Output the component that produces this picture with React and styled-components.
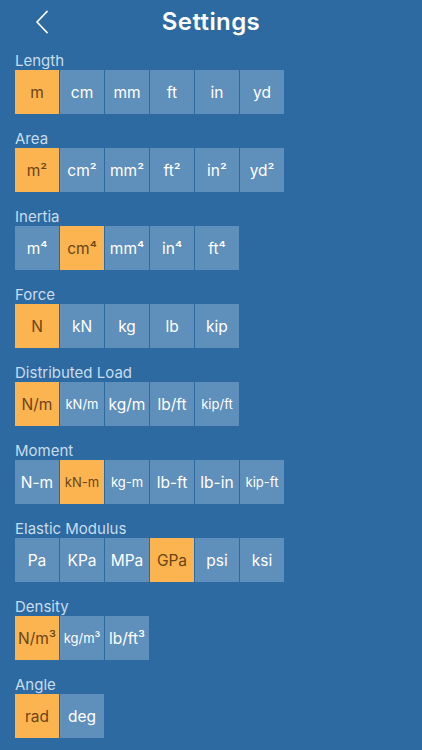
import React, { useState } from 'react';
import styled, { createGlobalStyle } from 'styled-components';

const GlobalStyle = createGlobalStyle`
  html, body {
    margin: 0;
    padding: 0;
    background: #2c6aa1;
  }
  body {
    font-family: Inter, "Liberation Sans", sans-serif;
  }
`;

const SECTIONS = [
  { title: 'Length', units: ['m', 'cm', 'mm', 'ft', 'in', 'yd'], selected: 0 },
  { title: 'Area', units: ['m²', 'cm²', 'mm²', 'ft²', 'in²', 'yd²'], selected: 0 },
  { title: 'Inertia', units: ['m⁴', 'cm⁴', 'mm⁴', 'in⁴', 'ft⁴'], selected: 1 },
  { title: 'Force', units: ['N', 'kN', 'kg', 'lb', 'kip'], selected: 0 },
  { title: 'Distributed Load', units: ['N/m', 'kN/m', 'kg/m', 'lb/ft', 'kip/ft'], selected: 0 },
  { title: 'Moment', units: ['N-m', 'kN-m', 'kg-m', 'lb-ft', 'lb-in', 'kip-ft'], selected: 1 },
  { title: 'Elastic Modulus', units: ['Pa', 'KPa', 'MPa', 'GPa', 'psi', 'ksi'], selected: 3 },
  { title: 'Density', units: ['N/m³', 'kg/m³', 'lb/ft³'], selected: 0 },
  { title: 'Angle', units: ['rad', 'deg'], selected: 0 },
];

const small = ['kN/m', 'kip/ft', 'kN-m', 'kg-m', 'kip-ft', 'kg/m³'];

function Section({ title, units, selected }) {
  const [current, setCurrent] = useState(selected);
  return (
    <Group>
      <Label>{title}</Label>
      <Row>
        {units.map((u, i) => (
          <UnitBtn
            key={u}
            $active={i === current}
            $small={small.includes(u)}
            onClick={() => setCurrent(i)}
          >
            {u}
          </UnitBtn>
        ))}
      </Row>
    </Group>
  );
}

export default function App() {
  return (
    <>
      <GlobalStyle />
      <Page>
        <Header>
          <BackBtn aria-label="Back">
            <svg width="14" height="24" viewBox="0 0 14 24" fill="none">
              <path d="M12 1.5 L2 12 L12 22.5" stroke="#fff" strokeWidth="1.8" strokeLinecap="round" strokeLinejoin="round" />
            </svg>
          </BackBtn>
          <Title>Settings</Title>
        </Header>
        <List>
          {SECTIONS.map((s) => (
            <Section key={s.title} {...s} />
          ))}
        </List>
      </Page>
    </>
  );
}

const Page = styled.div`
  width: 422px;
  min-height: 750px;
  background: #2c6aa1;
  box-sizing: border-box;
`;

const Header = styled.div`
  position: relative;
  height: 42px;
  display: flex;
  align-items: center;
  justify-content: center;
`;

const BackBtn = styled.button`
  position: absolute;
  left: 35px;
  top: 10px;
  background: none;
  border: none;
  padding: 0;
  cursor: pointer;
  display: flex;
`;

const Title = styled.h1`
  margin: 0;
  color: #fff;
  font-family: Inter, "Liberation Sans", sans-serif;
  font-weight: 600;
  font-size: 24px;
  letter-spacing: 0.4px;
`;

const List = styled.div`
  display: flex;
  flex-direction: column;
  gap: 16px;
  padding: 10px 0 0 15px;
`;

const Group = styled.div`
  display: flex;
  flex-direction: column;
`;

const Label = styled.div`
  color: #c9dcee;
  font-size: 15px;
  line-height: 18px;
  height: 18px;
`;

const Row = styled.div`
  display: flex;
  gap: 1px;
`;

const UnitBtn = styled.button`
  width: 44px;
  height: 44px;
  border: none;
  padding: 0;
  margin: 0;
  font-family: Inter, "Liberation Sans", sans-serif;
  font-size: ${(p) => (p.$small ? '13px' : '15.5px')};
  background: ${(p) => (p.$active ? '#fcb451' : '#5f8fbb')};
  color: ${(p) => (p.$active ? '#6a4515' : '#ffffff')};
  cursor: pointer;
  white-space: nowrap;
`;
